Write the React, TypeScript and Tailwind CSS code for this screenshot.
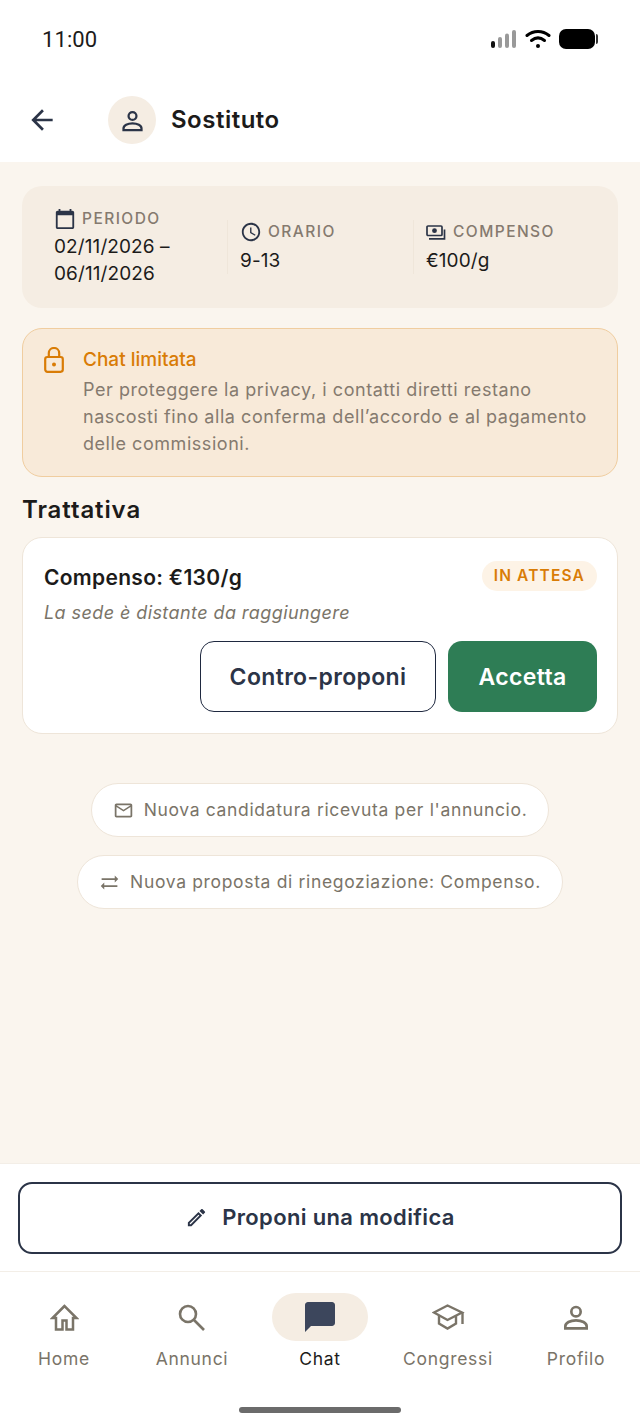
import { ReactNode } from 'react'
import {
  MdArrowBack,
  MdCalendarToday,
  MdAccessTime,
  MdOutlineEmail,
  MdSyncAlt,
  MdOutlineEdit,
  MdChatBubble,
} from 'react-icons/md'

const font = "font-['Inter','Noto_Sans',sans-serif]"

const PersonIcon = ({ size }: { size: number }) => (
  <svg width={size} height={size} viewBox="0 0 24 24" fill="none" stroke="currentColor" strokeWidth="2">
    <circle cx="12" cy="8" r="3.500" />
    <path d="M4 20.500v-1.500c0-2.600 3.600-4.500 8-4.500s8 1.900 8 4.500v1.500z" />
  </svg>
)

const HomeIcon = () => (
  <svg width="29" height="27" viewBox="0 0 29 27" fill="none" stroke="currentColor" strokeWidth="2.500">
    <path d="M14.500 2 2.500 14H6v11.500h6.500V16.500h4v9H23V14h3.500z" />
  </svg>
)

const SearchIcon = () => (
  <svg width="28" height="27" viewBox="0 0 28 27" fill="none" stroke="currentColor" strokeWidth="2.600">
    <circle cx="10" cy="10" r="8" />
    <path d="M16 16l10 10" />
  </svg>
)

const SchoolIcon = () => (
  <svg width="33" height="26" viewBox="0 0 33 26" fill="none" stroke="currentColor" strokeWidth="2.400">
    <path d="M15.500 1.500 30 8.500l-14.500 7.500L2 8.500z" />
    <path d="M7 12v7.500l8.500 5 8.500-5V12" />
    <path d="M30.500 8.500V20" />
  </svg>
)

const PaymentsIcon = () => (
  <svg width="21" height="15" viewBox="0 0 21 15" fill="none" stroke="currentColor" strokeWidth="1.700">
    <rect x="1" y="1" width="15" height="9.500" rx="1" />
    <circle cx="8.500" cy="5.700" r="2.400" fill="currentColor" stroke="none" />
    <path d="M3 13.800h15.500V4.500" />
  </svg>
)

const LockIcon = () => (
  <svg width="20" height="26" viewBox="0 0 20 26" fill="none" stroke="currentColor" strokeWidth="2.200">
    <rect x="1.200" y="10" width="17.600" height="14.800" rx="2.200" />
    <path d="M4.800 10V6.200a5.200 5.200 0 0 1 10.400 0V10" />
    <circle cx="10" cy="17.500" r="2" fill="currentColor" stroke="none" />
  </svg>
)

const StatusBar = () => (
  <div className="flex h-[78px] items-center justify-between bg-white px-[42px]">
    <span className="font-['Roboto',sans-serif] text-[22px] tracking-[0.1px] text-[#1c1b1a]">11:00</span>
    <div className="flex items-center gap-[8px]">
      <svg width="26" height="18" viewBox="0 0 26 18">
        <rect x="0" y="11" width="4" height="7" rx="2" fill="#111" />
        <rect x="7" y="7" width="4" height="11" rx="2" fill="#999" />
        <rect x="14" y="3.500" width="4" height="14.500" rx="2" fill="#999" />
        <rect x="21" y="0" width="4" height="18" rx="2" fill="#999" />
      </svg>
      <svg width="26" height="20" viewBox="0 0 26 20" fill="none" stroke="#000" strokeWidth="3" strokeLinecap="round">
        <path d="M2 6.500C8.500 1.200 17.500 1.200 24 6.500" />
        <path d="M6.500 11.500C10.500 8.300 15.500 8.300 19.500 11.500" />
        <circle cx="13" cy="17" r="2" fill="#000" stroke="none" />
      </svg>
      <div className="flex items-center gap-[1px]">
        <div className="h-[20px] w-[36px] rounded-[7px] bg-black" />
        <div className="h-[10px] w-[2px] rounded-r-sm bg-[#333]" />
      </div>
    </div>
  </div>
)

const InfoColumn = ({ icon, label, children, border }: { icon: ReactNode; label: string; children: ReactNode; border?: boolean }) => (
  <div className={`flex flex-col ${border ? 'border-l border-[#efe6da] pl-[12px]' : ''}`}>
    <div className="flex items-center gap-[6px] text-[#2b3447]">
      {icon}
      <span className="text-[15.500px] font-medium tracking-[1.450px] text-[#857a6f]">{label}</span>
    </div>
    <div className="mt-[3px] text-[19px] leading-[27px] tracking-[0.1px] text-[#1c1b1a]">{children}</div>
  </div>
)

const NavItem = ({ icon, label, active }: { icon: ReactNode; label: string; active?: boolean }) => (
  <div className="flex w-[128px] flex-col items-center">
    <div className={`flex h-[48px] w-[96px] items-center justify-center rounded-full ${active ? 'bg-[#f5ede3] text-[#3c465c]' : 'text-[#7a7468]'}`}>
      {icon}
    </div>
    <span className={`mt-[5px] text-[17.500px] tracking-[0.7px] ${active ? 'text-[#1c1b1a]' : 'text-[#7a7468]'}`}>{label}</span>
  </div>
)

const Pill = ({ icon, text }: { icon: ReactNode; text: string }) => (
  <div className="flex h-[54px] items-center gap-[10px] rounded-full border border-[#eee5d9] bg-white px-[21px] text-[#7a7468]">
    {icon}
    <span className="text-[17.500px] tracking-[0.66px]">{text}</span>
  </div>
)

export default function App() {
  return (
    <div className={`flex h-[1428px] w-[640px] flex-col overflow-hidden bg-[#faf5ee] ${font}`}>
      <StatusBar />

      <div className="flex h-[84px] items-center gap-[50px] bg-white pl-[26px]">
        <MdArrowBack size={32} className="text-[#2b3447]" />
        <div className="flex items-center gap-[15px]">
          <div className="flex h-[48px] w-[48px] items-center justify-center rounded-full bg-[#f5ede3] text-[#2b3447]">
            <PersonIcon size={27} />
          </div>
          <span className="text-[24px] font-semibold tracking-[0.5px] text-[#1c1b1a]">Sostituto</span>
        </div>
      </div>

      <div className="flex flex-1 flex-col px-[22px] pt-[24px]">
        <div className="grid h-[122px] grid-cols-[173px_186px_1fr] items-center rounded-[20px] bg-[#f5ede3] pl-[32px]">
          <InfoColumn icon={<MdCalendarToday size={22} />} label="PERIODO">
            02/11/2026 –<br />06/11/2026
          </InfoColumn>
          <InfoColumn border icon={<MdAccessTime size={22} />} label="ORARIO">9-13</InfoColumn>
          <InfoColumn border icon={<PaymentsIcon />} label="COMPENSO">€100/g</InfoColumn>
        </div>

        <div className="mt-[20px] flex h-[149px] gap-[19px] rounded-[20px] border border-[#f0cd9f] bg-[#f8ead9] pl-[21px] pt-[18px] text-[#d97c06]">
          <LockIcon />
          <div className="mt-[-1px] flex flex-col">
            <span className="text-[19px] font-medium leading-[27px]">Chat limitata</span>
            <p className="mt-[3px] text-[18px] leading-[27px] tracking-[0.55px] text-[#857a6f]">
              Per proteggere la privacy, i contatti diretti restano<br />
              nascosti fino alla conferma dell’accordo e al pagamento<br />
              delle commissioni.
            </p>
          </div>
        </div>

        <h2 className="mt-[17px] text-[24px] font-semibold leading-[32px] tracking-[0.9px] text-[#1c1b1a]">Trattativa</h2>

        <div className="mt-[11px] flex h-[197px] flex-col rounded-[20px] border border-[#eee5d9] bg-white pl-[21px] pr-[20px] pt-[23px]">
          <div className="flex items-center justify-between">
            <span className="mt-[3px] text-[21px] font-semibold leading-[26px] tracking-[0.3px] text-[#1c1b1a]">Compenso: €130/g</span>
            <span className="flex h-[30px] items-center rounded-full bg-[#fdf3e6] px-[12px] text-[15.500px] font-semibold tracking-[1.150px] text-[#d97c06]">IN ATTESA</span>
          </div>
          <p className="mt-[8px] text-[18px] italic leading-[28px] tracking-[0.42px] text-[#7a7468]">La sede è distante da raggiungere</p>
          <div className="mt-[14px] flex justify-end gap-[12px]">
            <button className="h-[71px] w-[236px] rounded-[14px] border border-[#1f2940] pt-[2px] text-[23px] font-semibold tracking-[0.35px] text-[#2b3447]">Contro-proponi</button>
            <button className="h-[71px] w-[149px] rounded-[14px] bg-[#2e7d55] pt-[2px] text-[23px] font-semibold tracking-[0.35px] text-white">Accetta</button>
          </div>
        </div>

        <div className="mt-[49px] flex flex-col items-center gap-[18px]">
          <Pill icon={<MdOutlineEmail size={21} />} text="Nuova candidatura ricevuta per l'annuncio." />
          <Pill icon={<MdSyncAlt size={21} />} text="Nuova proposta di rinegoziazione: Compenso." />
        </div>
      </div>

      <div className="flex h-[109px] items-center border-y border-[#f3eee7] bg-white px-[18px]">
        <button className="flex h-[72px] w-full items-center justify-center gap-[14px] rounded-[14px] border-2 border-[#2b3447] text-[22px] font-semibold tracking-[0.35px] text-[#2b3447]">
          <MdOutlineEdit size={23} />
          Proponi una modifica
        </button>
      </div>

      <div className="flex h-[156px] flex-col bg-white">
        <div className="flex pt-[21px]">
          <NavItem icon={<HomeIcon />} label="Home" />
          <NavItem icon={<SearchIcon />} label="Annunci" />
          <NavItem active icon={<MdChatBubble size={36} />} label="Chat" />
          <NavItem icon={<SchoolIcon />} label="Congressi" />
          <NavItem icon={<PersonIcon size={32} />} label="Profilo" />
        </div>
        <div className="mx-auto mt-[35px] h-[6px] w-[162px] rounded-full bg-[#6b6b6b]" />
      </div>
    </div>
  )
}
